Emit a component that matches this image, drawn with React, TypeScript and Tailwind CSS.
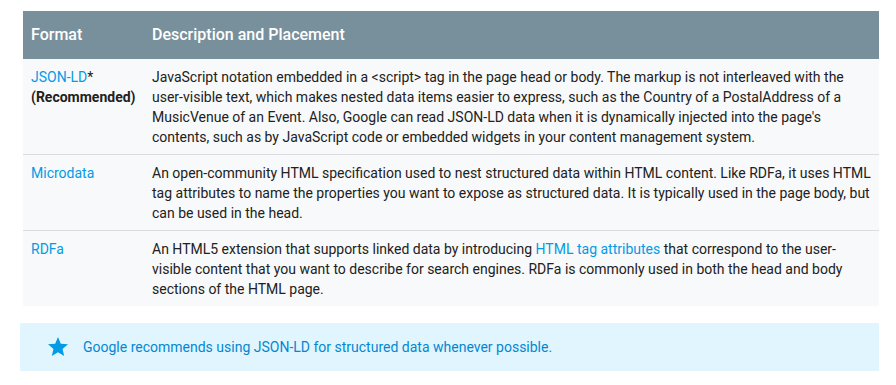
import React from 'react';

const rows = [
  {
    key: 'jsonld',
    format: (
      <>
        <a className="text-[#039be5]">JSON-LD</a>*<br />
        <b className="font-bold">(Recommended)</b>
      </>
    ),
    desc: (
      <>
        JavaScript notation embedded in a &lt;script&gt; tag in the page head or body. The markup is not interleaved with the
        user-visible text, which makes nested data items easier to express, such as the Country of a PostalAddress of a
        MusicVenue of an Event. Also, Google can read JSON-LD data when it is dynamically injected into the page's
        contents, such as by JavaScript code or embedded widgets in your content management system.
      </>
    ),
  },
  {
    key: 'microdata',
    format: <a className="text-[#039be5]">Microdata</a>,
    desc: (
      <>
        An open-community HTML specification used to nest structured data within HTML content. Like RDFa, it uses HTML
        tag attributes to name the properties you want to expose as structured data. It is typically used in the page
        body, but can be used in the head.
      </>
    ),
  },
  {
    key: 'rdfa',
    format: <a className="text-[#039be5]">RDFa</a>,
    desc: (
      <>
        An HTML5 extension that supports linked data by introducing{' '}
        <a className="text-[#039be5]">HTML tag attributes</a> that correspond to the user-visible content that you want
        to describe for search engines. RDFa is commonly used in both the head and body sections of the HTML page.
      </>
    ),
  },
];

const StarIcon = ({ className }: { className?: string }) => (
  <svg className={className} viewBox="0 0 24 24" fill="currentColor">
    <path d="M12 17.27L18.18 21l-1.64-7.03L22 9.24l-7.19-.61L12 2 9.19 8.63 2 9.24l5.46 4.73L5.82 21z" />
  </svg>
);

export default function App() {
  return (
    <div className="bg-white w-[896px] h-[385px] pl-5 pr-[17px] pt-[11px] font-['Roboto',sans-serif] text-[14px] leading-5 text-[#212121]">
      <table className="ml-[3px] w-[856px] border-collapse table-fixed">
        <thead>
          <tr className="bg-[#78909c] text-white text-[16px] h-12">
            <th className="w-[121px] px-2 text-left font-medium">Format</th>
            <th className="px-2 text-left font-medium">Description and Placement</th>
          </tr>
        </thead>
        <tbody>
          {rows.map((r) => (
            <tr key={r.key} className="bg-[#f8f9fa] border-b border-[#dadce0] last:border-b-0">
              <td className="px-2 pt-2 pb-[7px] align-top">{r.format}</td>
              <td className="px-2 pt-2 pb-[7px] align-top">{r.desc}</td>
            </tr>
          ))}
        </tbody>
      </table>
      <div className="mt-[17px] h-12 bg-[#e1f5fe] flex items-center pl-[26px] text-[#0288d1]">
        <StarIcon className="w-6 h-6 text-[#039be5]" />
        <span className="ml-[13px]">Google recommends using JSON-LD for structured data whenever possible.</span>
      </div>
    </div>
  );
}
